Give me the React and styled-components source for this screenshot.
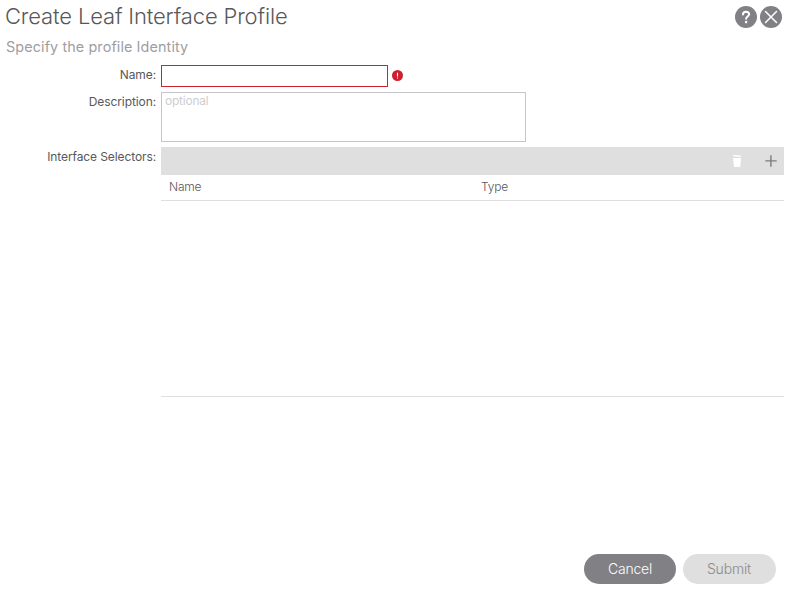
import React from "react";
import styled, { createGlobalStyle } from "styled-components";

const GlobalStyle = createGlobalStyle`
  * { box-sizing: border-box; }
  body { margin: 0; background: #fff; }
  input, textarea, button { font-family: inherit; }
`;

const Dialog = styled.main`
  width: 791px;
  height: 593px;
  overflow: hidden;
  display: flex;
  flex-direction: column;
  background: #fff;
  color: #58585b;
  font-family: Inter, "Liberation Sans", sans-serif;
  font-size: 12px;
`;

const Header = styled.header`
  height: 34px;
  flex: none;
  display: flex;
  justify-content: space-between;
  padding: 0 9px 0 5px;
`;

const Title = styled.h1`
  margin: 0;
  font-size: 22px;
  font-weight: 300;
  line-height: 33px;
  letter-spacing: -0.15px;
  white-space: nowrap;
`;

const HeaderActions = styled.div`
  display: flex;
  gap: 3px;
  padding-top: 6px;
`;

const IconButton = styled.button`
  display: block;
  width: ${(p) => p.$width || 22}px;
  height: ${(p) => p.$height || 22}px;
  padding: 0;
  border: 0;
  background: none;
  svg { display: block; }
`;

const Subtitle = styled.h2`
  margin: 0;
  height: 31px;
  flex: none;
  padding-left: 6px;
  font-size: 14.4px;
  font-weight: 400;
  line-height: 26px;
  letter-spacing: 0.1px;
  color: #9e9ea2;
`;

const Field = styled.div`
  display: flex;
  align-items: flex-start;
  margin-bottom: 5px;
`;

const Label = styled.label`
  width: 156px;
  margin-right: 5px;
  flex: none;
  text-align: right;
  line-height: 20px;
  letter-spacing: -0.1px;
  white-space: nowrap;
`;

const NameInput = styled.input`
  width: 227px;
  height: 22px;
  padding: 0 4px;
  border: 1px solid #cf2030;
  border-radius: 0;
  outline: 0;
`;

const ErrorIcon = styled.svg`
  width: 12px;
  height: 12px;
  margin: 5px 0 0 4px;
`;

const DescriptionInput = styled.textarea`
  display: block;
  width: 365px;
  height: 50px;
  padding: 0 3px;
  border: 1px solid #c4c4c9;
  border-radius: 0;
  outline: 0;
  resize: none;
  font-size: 12px;
  line-height: 16px;
  letter-spacing: -0.22px;
  &::placeholder { color: #cececf; opacity: 1; }
`;

const SelectorTable = styled.section`
  width: 623px;
  height: 250px;
  border-bottom: 1px solid #dfdfdf;
`;

const Toolbar = styled.div`
  height: 28px;
  display: flex;
  align-items: center;
  justify-content: flex-end;
  gap: 22px;
  padding-right: 7px;
  background: #dfdfdf;
`;

const TableHead = styled.div`
  height: 26px;
  display: grid;
  grid-template-columns: 312px 1fr;
  border-bottom: 1px solid #dfdfdf;
`;

const HeadCell = styled.span`
  padding-left: 8px;
  font-weight: 300;
  line-height: 24px;
  letter-spacing: -0.2px;
`;

const Footer = styled.footer`
  margin-top: auto;
  display: flex;
  justify-content: flex-end;
  gap: 7px;
  padding: 0 15px 9px 0;
`;

const PillButton = styled.button`
  width: ${(p) => p.$width}px;
  height: 30px;
  padding: 0 ${(p) => (p.$muted ? 1 : 0)}px 0 0;
  border: 0;
  border-radius: 15px;
  background: ${(p) => (p.$muted ? "#dfdfdf" : "#808085")};
  color: ${(p) => (p.$muted ? "#8b8b90" : "#fff")};
  font-size: 14px;
  font-weight: 300;
  line-height: 30px;
  letter-spacing: -0.18px;
`;

export default function App() {
  return (
    <>
      <GlobalStyle />
      <Dialog>
        <Header>
          <Title>Create Leaf Interface Profile</Title>
          <HeaderActions>
            <IconButton aria-label="Help">
              <svg width="22" height="22" viewBox="0 0 22 22" fill="none">
                <circle cx="11" cy="11" r="11" fill="#808085" />
                <path d="M8 8.4C8 6.6 9.2 5.7 11 5.7s3.1 1 3.1 2.6c0 2.2-3 2.3-3 4.5" stroke="#fff" strokeWidth="2" strokeLinecap="round" />
                <circle cx="11.1" cy="16.1" r="1.3" fill="#fff" />
              </svg>
            </IconButton>
            <IconButton aria-label="Close">
              <svg width="22" height="22" viewBox="0 0 22 22" fill="none">
                <circle cx="11" cy="11" r="11" fill="#808085" />
                <path d="M5.5 5.5l11 11M16.5 5.5l-11 11" stroke="#fff" strokeWidth="1.5" strokeLinecap="round" />
              </svg>
            </IconButton>
          </HeaderActions>
        </Header>
        <Subtitle>Specify the profile Identity</Subtitle>
        <Field>
          <Label htmlFor="name">Name:</Label>
          <NameInput id="name" />
          <ErrorIcon viewBox="0 0 12 12">
            <circle cx="5.5" cy="5.5" r="5.5" fill="#cf2030" />
            <path d="M5.5 2.8v3.6M5.5 7.4v1.1" stroke="#fff" strokeWidth="1.1" />
          </ErrorIcon>
        </Field>
        <Field>
          <Label htmlFor="description">Description:</Label>
          <DescriptionInput id="description" placeholder="optional" />
        </Field>
        <Field>
          <Label as="span">Interface Selectors:</Label>
          <SelectorTable>
            <Toolbar>
              <IconButton aria-label="Delete" $width={12} $height={14}>
                <svg width="12" height="14" viewBox="0 0 12 14" fill="#fff">
                  <path d="M1.8 1.2L5 1l5 .8v1.2L1.8 2.2zM2 4h8l-.8 9H3z" />
                </svg>
              </IconButton>
              <IconButton aria-label="Add" $width={12} $height={12}>
                <svg width="12" height="12" viewBox="0 0 12 12" fill="none">
                  <path d="M5.9 .3v11.4M.3 5.9h11.4" stroke="#7d7d80" strokeWidth="1.4" />
                </svg>
              </IconButton>
            </Toolbar>
            <TableHead>
              <HeadCell>Name</HeadCell>
              <HeadCell>Type</HeadCell>
            </TableHead>
          </SelectorTable>
        </Field>
        <Footer>
          <PillButton $width={92}>Cancel</PillButton>
          <PillButton $width={93} $muted>Submit</PillButton>
        </Footer>
      </Dialog>
    </>
  );
}
